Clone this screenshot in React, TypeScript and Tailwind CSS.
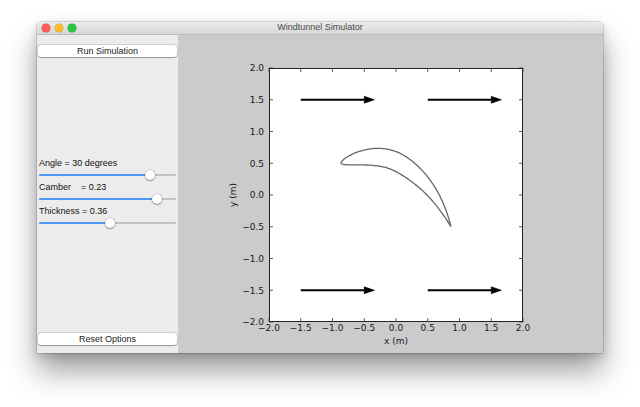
import React from "react";

const X = (x: number) => 91 + (x + 2) * 63.5;
const Y = (y: number) => 33 + (2 - y) * 63.5;

function airfoilPath(): string {
  const m = 0.23, p = 0.4, t = 0.165;
  const c = 2;
  const ang = (30 * Math.PI) / 180;
  const u = [Math.cos(ang), -Math.sin(ang)];
  const nv = [Math.sin(ang), Math.cos(ang)];
  const LE = [-Math.cos(ang), Math.sin(ang)];
  const N = 80;
  const upper: [number, number][] = [];
  const lower: [number, number][] = [];
  for (let i = 0; i <= N; i++) {
    const s = (1 - Math.cos((Math.PI * i) / N)) / 2;
    let yc: number, dyc: number;
    if (s < p) {
      yc = (m / (p * p)) * (2 * p * s - s * s);
      dyc = ((2 * m) / (p * p)) * (p - s);
    } else {
      yc = (m / ((1 - p) * (1 - p))) * (1 - 2 * p + 2 * p * s - s * s);
      dyc = ((2 * m) / ((1 - p) * (1 - p))) * (p - s);
    }
    const yt =
      5 * t * (0.2969 * Math.pow(s, 0.62) - 0.126 * s - 0.3516 * s * s + 0.2843 * s ** 3 - 0.1036 * s ** 4) * 1.12;
    const th = Math.atan(dyc);
    const us = s - yt * Math.sin(th);
    const un = yc + yt * Math.cos(th);
    const ls = s + yt * Math.sin(th);
    const ln = yc - yt * Math.cos(th);
    const toPx = (ss: number, nn: number): [number, number] => {
      const dx = LE[0] + c * (ss * u[0] + nn * nv[0]);
      const dy = LE[1] + c * (ss * u[1] + nn * nv[1]);
      return [X(dx), Y(dy)];
    };
    upper.push(toPx(us, un));
    lower.push(toPx(ls, ln));
  }
  const pts = [...upper.slice().reverse(), ...lower.slice(1)];
  return pts.map((q, i) => `${i === 0 ? "M" : "L"}${q[0].toFixed(2)},${q[1].toFixed(2)}`).join(" ");
}

const ticks = [-2, -1.5, -1, -0.5, 0, 0.5, 1, 1.5, 2];
const fmt = (v: number) => (v < 0 ? "\u2212" : "") + Math.abs(v).toFixed(1);

function Arrow({ x, y }: { x: number; y: number }) {
  const x0 = X(x);
  const x1 = X(x + 1);
  const xt = X(x + 1.16);
  const yy = Y(y);
  return (
    <g>
      <line x1={x0} y1={yy} x2={x1} y2={yy} stroke="#000" strokeWidth={1.8} />
      <polygon points={`${x1},${yy - 3.4} ${xt},${yy} ${x1},${yy + 3.4}`} fill="#000" stroke="#000" strokeWidth={0.6} />
    </g>
  );
}

function Plot() {
  const left = 91, top = 33, right = 345, bottom = 287;
  return (
    <svg width="425" height="318" viewBox="0 0 425 318" className="block">
      <rect x={left} y={top} width={right - left} height={bottom - top} fill="#fff" />
      {[1.5, -1.5].map((yy) => [-1.5, 0.5].map((xx) => <Arrow key={`${xx}${yy}`} x={xx} y={yy} />))}
      <path d={airfoilPath()} fill="none" stroke="#666" strokeWidth={1.3} strokeLinejoin="round" />
      <rect x={left + 0.5} y={top + 0.5} width={right - left - 1} height={bottom - top - 1} fill="none" stroke="#222" strokeWidth={1} />
      {ticks.map((v) => (
        <g key={v} stroke="#333" strokeWidth={0.8}>
          <line x1={X(v)} y1={bottom} x2={X(v)} y2={bottom - 4} />
          <line x1={X(v)} y1={top} x2={X(v)} y2={top + 4} />
          <line x1={left} y1={Y(v)} x2={left + 4} y2={Y(v)} />
          <line x1={right} y1={Y(v)} x2={right - 4} y2={Y(v)} />
        </g>
      ))}
      <g fontFamily="'DejaVu Sans', sans-serif" fontSize="9" fill="#1a1a1a">
        {ticks.map((v) => (
          <text key={`x${v}`} x={X(v)} y={296} textAnchor="middle">
            {fmt(v)}
          </text>
        ))}
        {ticks.map((v) => (
          <text key={`y${v}`} x={86} y={Y(v) + 3.3} textAnchor="end">
            {fmt(v)}
          </text>
        ))}
        <text x={218} y={309} textAnchor="middle">x (m)</text>
        <text x={58} y={160} textAnchor="middle" transform="rotate(-90 58 160)">y (m)</text>
      </g>
    </svg>
  );
}

function Slider({ frac }: { frac: number }) {
  return (
    <div className="relative h-[12px] ml-[2px] w-[137px] flex items-center">
      <div className="relative w-full h-[2px] bg-[#c2c2c2] rounded-full">
        <div className="absolute left-0 top-0 h-[2px] bg-[#4f97f7] rounded-full" style={{ width: `${frac * 100}%` }} />
      </div>
      <div
        className="absolute top-[1px] w-[10px] h-[10px] rounded-full bg-white shadow-[0_0_0_0.5px_rgba(0,0,0,0.25),0_1px_1.5px_rgba(0,0,0,0.3)]"
        style={{ left: `calc(${frac * 100}% - 5px)` }}
      />
    </div>
  );
}

function Btn({ label }: { label: string }) {
  return (
    <div className="mx-[1px] h-[12px] rounded-[3px] bg-white shadow-[0_0_0_0.5px_rgba(0,0,0,0.18),0_0.5px_1px_rgba(0,0,0,0.3)] flex items-center justify-center text-[9px] leading-[12px] text-[#222]">
      {label}
    </div>
  );
}

export default function App() {
  return (
    <div className="w-[640px] h-[407px] bg-white pl-[37px] pt-[22px] overflow-hidden" style={{ fontFamily: "'Liberation Sans', Arial, sans-serif" }}>
      <div className="w-[566px] h-[331px] flex flex-col rounded-t-[4px] overflow-hidden shadow-[0_0_0_0.5px_rgba(0,0,0,0.25),0_18px_30px_rgba(0,0,0,0.38),0_4px_10px_rgba(0,0,0,0.15)]">
        <div className="relative h-[13px] bg-gradient-to-b from-[#ececec] to-[#d6d6d6] border-b border-[#bdbdbd] flex items-center">
          <div className="flex gap-[5px] pl-[5px]">
            <div className="w-[8px] h-[8px] rounded-full bg-[#fc5f57] shadow-[0_0_0_0.5px_#e0443e]" />
            <div className="w-[8px] h-[8px] rounded-full bg-[#fdbc2e] shadow-[0_0_0_0.5px_#dea123]" />
            <div className="w-[8px] h-[8px] rounded-full bg-[#28c840] shadow-[0_0_0_0.5px_#1aab29]" />
          </div>
          <div className="absolute inset-0 flex items-center justify-center text-[9px] text-[#4a4a4a]">Windtunnel Simulator</div>
        </div>
        <div className="flex flex-1">
          <div className="w-[141px] bg-[#ececec] flex flex-col pt-[10px] pb-[8px]">
            <Btn label="Run Simulation" />
            <div className="mt-[100px] flex flex-col">
              <div className="h-[12px] leading-[12px] pl-[2px] text-[9px] text-[#111]">Angle = 30 degrees</div>
              <Slider frac={0.81} />
              <div className="h-[12px] leading-[12px] pl-[2px] text-[9px] text-[#111] whitespace-pre">Camber    = 0.23</div>
              <Slider frac={0.86} />
              <div className="h-[12px] leading-[12px] pl-[2px] text-[9px] text-[#111]">Thickness = 0.36</div>
              <Slider frac={0.52} />
            </div>
            <div className="mt-auto">
              <Btn label="Reset Options" />
            </div>
          </div>
          <div className="flex-1 bg-[#cbcbcb]">
            <Plot />
          </div>
        </div>
      </div>
    </div>
  );
}
